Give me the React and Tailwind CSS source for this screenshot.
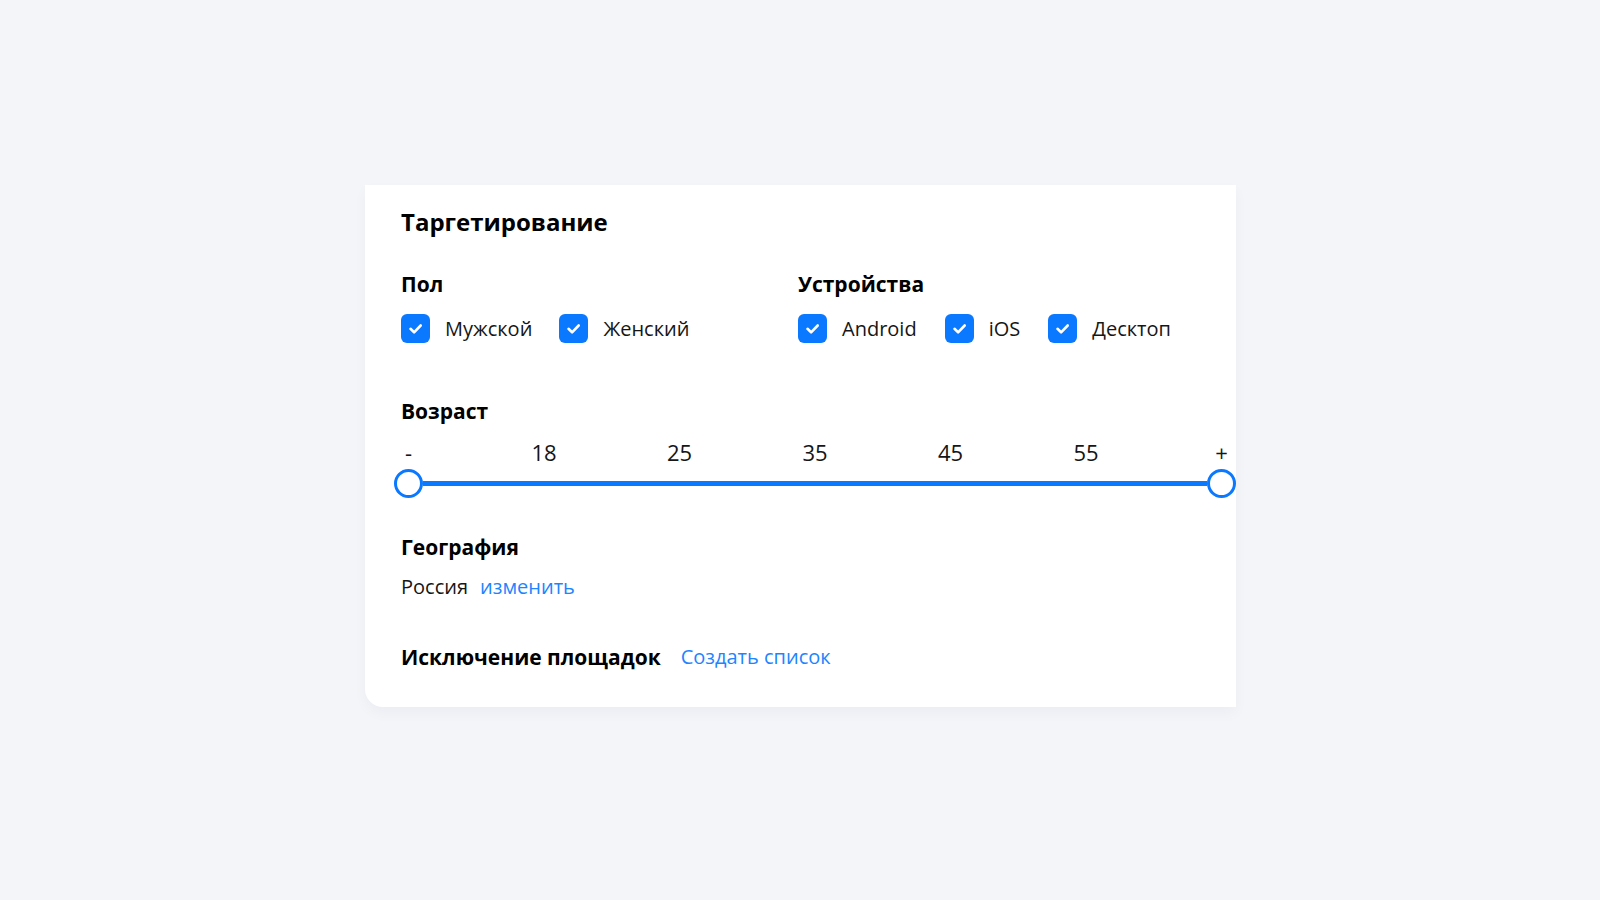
const font = { fontFamily: '"Open Sans", "Liberation Sans", Arial, sans-serif' };

function Check({ label }) {
  return (
    <label className="flex items-center gap-[15px]">
      <span className="flex h-[29px] w-[29px] items-center justify-center rounded-[6px] bg-[#0a78ff]">
        <svg width="29" height="29" viewBox="0 0 29 29" fill="none">
          <path
            d="M9.5 14.8l3.6 3.5 6.6-6.8"
            stroke="#fff"
            strokeWidth="2.6"
            strokeLinecap="round"
            strokeLinejoin="round"
          />
        </svg>
      </span>
      <span className="text-[20px] leading-[28px] text-[#161616]">{label}</span>
    </label>
  );
}

function Thumb() {
  return (
    <span className="block h-[29px] w-[29px] shrink-0 rounded-full border-[3px] border-[#0a78ff] bg-white" />
  );
}

export default function App() {
  const ages = ["-", "18", "25", "35", "45", "55", "+"];

  return (
    <div
      className="flex min-h-[900px] w-full items-start justify-center bg-[#f4f5f9] pt-[185px]"
      style={font}
    >
      <div className="ml-[1px] w-[871px] rounded-bl-[18px] bg-white pb-[36px] pl-[36px] pt-[21px] shadow-[0_6px_14px_rgba(20,30,60,0.035)]">
        <h1 className="text-[24px] font-bold leading-[32px] text-black">
          Таргетирование
        </h1>

        <div className="mt-[32px] flex">
          <div className="w-[397px]">
            <h2 className="text-[21px] font-bold leading-[28px] text-black">Пол</h2>
            <div className="mt-[16px] flex gap-[27px]">
              <Check label="Мужской" />
              <Check label="Женский" />
            </div>
          </div>
          <div>
            <h2 className="text-[21px] font-bold leading-[28px] text-black">
              Устройства
            </h2>
            <div className="mt-[16px] flex gap-[28px]">
              <Check label="Android" />
              <Check label="iOS" />
              <Check label="Десктоп" />
            </div>
          </div>
        </div>

        <h2 className="mt-[54px] text-[21px] font-bold leading-[28px] text-black">
          Возраст
        </h2>
        <div className="-ml-[7px] mt-[13px]">
          <div className="flex justify-between">
            {ages.map((a) => (
              <span
                key={a}
                className="w-[29px] text-center text-[22px] leading-[28px] text-[#161616]"
              >
                {a}
              </span>
            ))}
          </div>
          <div className="mt-[3px] flex items-center">
            <Thumb />
            <span className="h-[5px] flex-1 bg-[#0a78ff]" />
            <Thumb />
          </div>
        </div>

        <h2 className="mt-[35px] text-[21px] font-bold leading-[28px] text-black">
          География
        </h2>
        <div className="mt-[12px] flex gap-[12px] text-[20px] leading-[28px]">
          <span className="text-[#161616]">Россия</span>
          <a className="text-[#1e84ff]">изменить</a>
        </div>

        <div className="mt-[42px] flex items-center gap-[20px]">
          <h2 className="text-[21px] font-bold leading-[28px] text-black">
            Исключение площадок
          </h2>
          <a className="text-[20px] leading-[28px] text-[#1e84ff]">Создать список</a>
        </div>
      </div>
    </div>
  );
}
